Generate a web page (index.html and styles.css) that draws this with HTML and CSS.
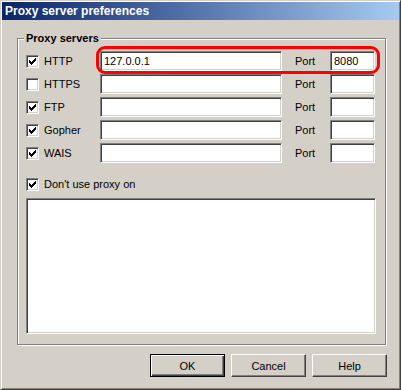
FILE: index.html
```html
<!DOCTYPE html>
<html lang="en">
<head>
    <meta charset="UTF-8">
    <title>Proxy server preferences</title>
    <link rel="stylesheet" href="styles.css">
</head>
<body>
    <div class="window">
        <div class="titlebar">Proxy server preferences</div>

        <div class="content">
            <div class="group">
                <div class="group-title">Proxy servers</div>

                <div class="rows">
                    <div class="row">
                        <label class="check-label">
                            <span class="checkbox"><svg viewBox="0 0 13 13" width="13" height="13"><polygon points="3,5 4,5 4,6 5,6 5,7 6,7 6,6 7,6 7,5 8,5 8,4 9,4 9,3 10,3 10,6 9,6 9,7 8,7 8,8 7,8 7,9 6,9 6,10 5,10 5,9 4,9 4,8 3,8"/></svg></span>
                            HTTP
                        </label>
                        <div class="fields highlight">
                            <input class="field host" value="127.0.0.1">
                            <span class="port-label">Port</span>
                            <input class="field port" value="8080">
                        </div>
                    </div>
                    <div class="row">
                        <label class="check-label">
                            <span class="checkbox"></span>
                            HTTPS
                        </label>
                        <div class="fields">
                            <input class="field host">
                            <span class="port-label">Port</span>
                            <input class="field port">
                        </div>
                    </div>
                    <div class="row">
                        <label class="check-label">
                            <span class="checkbox"><svg viewBox="0 0 13 13" width="13" height="13"><polygon points="3,5 4,5 4,6 5,6 5,7 6,7 6,6 7,6 7,5 8,5 8,4 9,4 9,3 10,3 10,6 9,6 9,7 8,7 8,8 7,8 7,9 6,9 6,10 5,10 5,9 4,9 4,8 3,8"/></svg></span>
                            FTP
                        </label>
                        <div class="fields">
                            <input class="field host">
                            <span class="port-label">Port</span>
                            <input class="field port">
                        </div>
                    </div>
                    <div class="row">
                        <label class="check-label">
                            <span class="checkbox"><svg viewBox="0 0 13 13" width="13" height="13"><polygon points="3,5 4,5 4,6 5,6 5,7 6,7 6,6 7,6 7,5 8,5 8,4 9,4 9,3 10,3 10,6 9,6 9,7 8,7 8,8 7,8 7,9 6,9 6,10 5,10 5,9 4,9 4,8 3,8"/></svg></span>
                            Gopher
                        </label>
                        <div class="fields">
                            <input class="field host">
                            <span class="port-label">Port</span>
                            <input class="field port">
                        </div>
                    </div>
                    <div class="row">
                        <label class="check-label">
                            <span class="checkbox"><svg viewBox="0 0 13 13" width="13" height="13"><polygon points="3,5 4,5 4,6 5,6 5,7 6,7 6,6 7,6 7,5 8,5 8,4 9,4 9,3 10,3 10,6 9,6 9,7 8,7 8,8 7,8 7,9 6,9 6,10 5,10 5,9 4,9 4,8 3,8"/></svg></span>
                            WAIS
                        </label>
                        <div class="fields">
                            <input class="field host">
                            <span class="port-label">Port</span>
                            <input class="field port">
                        </div>
                    </div>
                </div>

                <div class="row no-proxy">
                    <label class="check-label">
                        <span class="checkbox"><svg viewBox="0 0 13 13" width="13" height="13"><polygon points="3,5 4,5 4,6 5,6 5,7 6,7 6,6 7,6 7,5 8,5 8,4 9,4 9,3 10,3 10,6 9,6 9,7 8,7 8,8 7,8 7,9 6,9 6,10 5,10 5,9 4,9 4,8 3,8"/></svg></span>
                        Don't use proxy on
                    </label>
                </div>
                <textarea class="field exceptions"></textarea>
            </div>

            <div class="buttons">
                <button class="btn default">OK</button>
                <button class="btn">Cancel</button>
                <button class="btn">Help</button>
            </div>
        </div>
    </div>
</body>
</html>
```

FILE: styles.css
```css
body {
    margin: 0;
    background-color: #d4d0c8;
    font-family: "Liberation Sans", Arial, sans-serif;
    font-size: 11px;
    color: #000;
}

.window {
    width: 401px;
    height: 390px;
    box-sizing: border-box;
    border: 1px solid;
    border-color: #d4d0c8 #404040 #404040 #d4d0c8;
    box-shadow: inset 1px 1px 0 #fff, inset -1px -1px 0 #808080;
    padding: 1px;
}

.titlebar {
    height: 18px;
    line-height: 19px;
    padding-left: 3px;
    overflow: hidden;
    background: linear-gradient(to right, #0a246a, #a6caf0);
    color: #fff;
    font-weight: bold;
    font-size: 12px;
}

.content {
    padding: 18px 0 0 15px;
}

/* Group box with etched border */
.group {
    width: 369px;
    box-sizing: border-box;
    border: 1px solid #808080;
    box-shadow: 1px 1px 0 #fff, inset 1px 1px 0 #fff;
    padding: 0 9px 10px 8px;
}

.group-title {
    width: fit-content;
    margin: -7px 0 0 -2px;
    padding: 0 2px;
    line-height: 13px;
    font-weight: bold;
    background-color: #d4d0c8;
}

.rows {
    display: flex;
    flex-direction: column;
    gap: 3px;
    margin-top: 6px;
}

.row {
    display: flex;
    align-items: center;
    height: 20px;
}

.check-label {
    display: flex;
    align-items: center;
    gap: 5px;
    width: 74px;
    white-space: nowrap;
}

.no-proxy {
    margin-top: 11px;
}

.no-proxy .check-label {
    width: auto;
}

.checkbox {
    width: 13px;
    height: 13px;
    flex: none;
    box-sizing: border-box;
    background-color: #fff;
    border: 1px solid;
    border-color: #808080 #fff #fff #808080;
    box-shadow: inset 1px 1px 0 #404040, inset -1px -1px 0 #d4d0c8;
    position: relative;
}

.checkbox svg {
    display: block;
    margin: -1px;
    shape-rendering: crispEdges;
}

.fields {
    display: flex;
    align-items: center;
    position: relative;
}

/* Red annotation round the HTTP settings */
.highlight::after {
    content: "";
    position: absolute;
    top: -5px;
    left: -4px;
    right: -5px;
    bottom: -3px;
    border: 3px solid #ff0000;
    border-radius: 9px;
    pointer-events: none;
}

.field {
    box-sizing: border-box;
    margin: 0;
    padding: 0 3px;
    height: 20px;
    border: 1px solid;
    border-color: #808080 #fff #fff #808080;
    box-shadow: inset 1px 1px 0 #404040, inset -1px -1px 0 #d4d0c8;
    background-color: #fff;
    font: inherit;
    color: #000;
    outline: none;
}

.host {
    width: 182px;
}

.port-label {
    margin-left: 13px;
    width: 35px;
}

.port {
    width: 45px;
}

.exceptions {
    display: block;
    width: 350px;
    height: 136px;
    margin-top: 4px;
    resize: none;
}

.buttons {
    display: flex;
    justify-content: flex-end;
    gap: 6px;
    width: 370px;
    margin-top: 9px;
}

.btn {
    width: 75px;
    height: 23px;
    padding: 0;
    font: inherit;
    color: #000;
    background-color: #d4d0c8;
    border: 1px solid;
    border-color: #fff #404040 #404040 #fff;
    box-shadow: inset -1px -1px 0 #808080;
}

.btn.default {
    border-color: #000;
    box-shadow: inset 1px 1px 0 #fff, inset -1px -1px 0 #404040, inset -2px -2px 0 #808080;
}
```
